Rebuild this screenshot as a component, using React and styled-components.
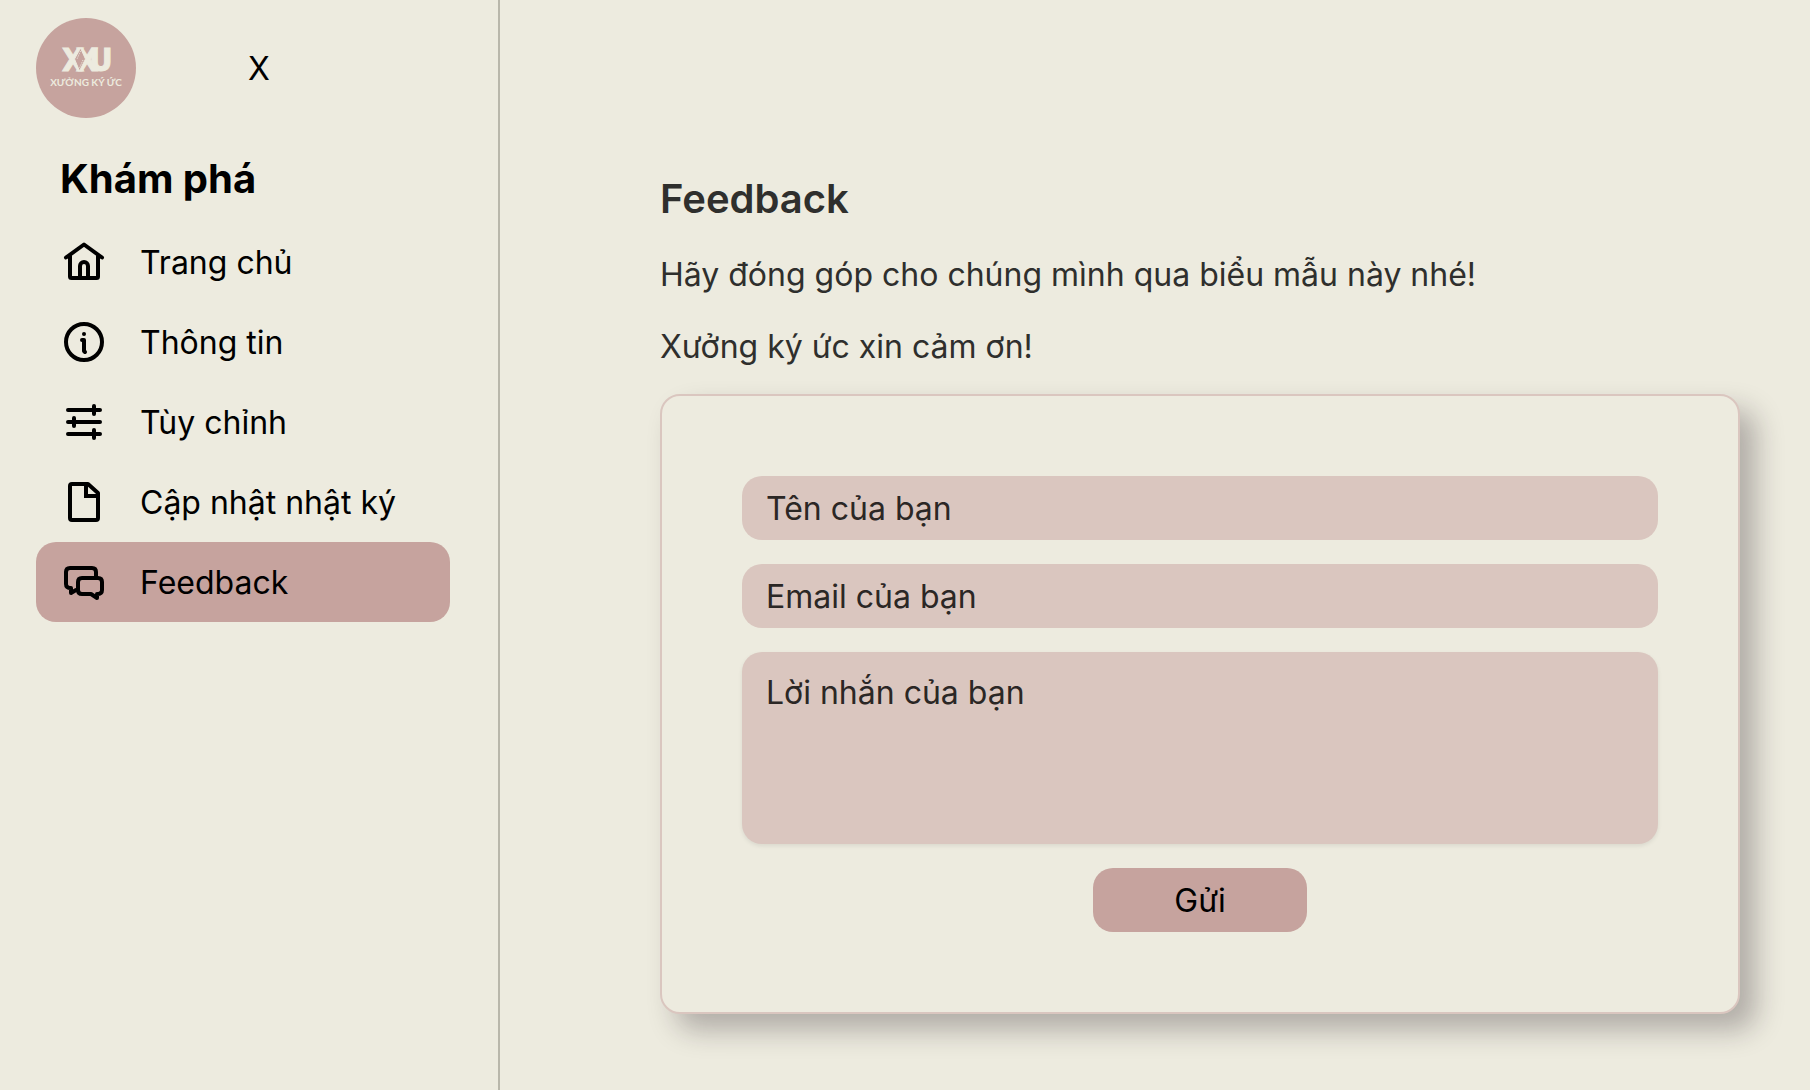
import React, { useState } from "react";
import styled, { createGlobalStyle, ThemeProvider } from "styled-components";

const theme = {
  bg: "#edebdf",
  primary: "#c6a39e",
  primary_soft: "#dac6bf",
  border: "#b9b7ab",
  text_primary: "#000000",
  text_secondary: "#2f2f2d",
  text_placeholder: "#2b2725",
};

const GlobalStyle = createGlobalStyle`
  * {
    box-sizing: border-box;
  }

  body {
    margin: 0;
    background: ${theme.bg};
    font-family: Inter, "Liberation Sans", sans-serif;
  }

  button,
  input,
  textarea {
    font-family: inherit;
  }
`;

const Page = styled.div`
  display: flex;
  min-height: 100vh;
  font-size: 32px;
  line-height: 50px;
  color: ${({ theme }) => theme.text_primary};
`;

const Sidebar = styled.aside`
  flex: 0 0 500px;
  padding: 18px 48px 18px 36px;
  border-right: 2px solid ${({ theme }) => theme.border};
`;

const SidebarHeader = styled.div`
  display: flex;
  align-items: center;
  gap: 103px;
  margin-bottom: 32px;
`;

const LogoLink = styled.a`
  display: block;
  width: 100px;
  height: 100px;
`;

const CloseButton = styled.button`
  width: 40px;
  padding: 2px 0 0;
  border: none;
  background: none;
  color: inherit;
  font-size: 32px;
  line-height: 50px;
  cursor: pointer;
`;

const SidebarTitle = styled.h2`
  margin: 0 0 14px;
  padding-left: 24px;
  font-size: 40px;
  font-weight: 700;
  line-height: 58px;
`;

const NavLink = styled.a`
  display: flex;
  align-items: center;
  gap: 36px;
  height: 80px;
  padding: 0 28px;
  border-radius: 20px;
  color: inherit;
  text-decoration: none;
  white-space: nowrap;
  background: ${({ $active, theme }) =>
    $active ? theme.primary : "transparent"};

  &:hover {
    background: ${({ theme }) => theme.primary};
  }
`;

const NavLabel = styled.span`
  padding-top: 2px;
`;

const Icon = styled.svg`
  flex: none;
  width: 40px;
  height: 40px;
  overflow: visible;
  fill: none;
  stroke: currentColor;
  stroke-width: 4px;
  stroke-linecap: round;
  stroke-linejoin: round;
`;

const Main = styled.main`
  flex: 1;
  min-width: 0;
  padding: 170px 70px 76px 160px;
  color: ${({ theme }) => theme.text_secondary};
`;

const Title = styled.h1`
  margin: 0 0 22px;
  font-size: 40px;
  font-weight: 600;
  line-height: 58px;
`;

const Desc = styled.p`
  margin: 0 0 22px;
`;

const Form = styled.form`
  display: flex;
  flex-direction: column;
  gap: 24px;
  padding: 80px;
  border: 2px solid ${({ theme }) => theme.primary_soft};
  border-radius: 20px;
  background: ${({ theme }) => theme.bg};
  box-shadow: 16px 16px 28px rgba(32, 22, 30, 0.29);
`;

const Input = styled.input`
  width: 100%;
  height: 64px;
  padding: 0 24px;
  border: none;
  border-radius: 20px;
  outline: none;
  background: ${({ theme }) => theme.primary_soft};
  color: ${({ theme }) => theme.text_placeholder};
  font-size: 32px;

  &::placeholder {
    color: ${({ theme }) => theme.text_placeholder};
    opacity: 1;
  }
`;

const TextArea = styled(Input)`
  display: block;
  height: 192px;
  padding: 16px 24px;
  line-height: 50px;
  resize: none;
  box-shadow: 0 2px 4px rgba(0, 0, 0, 0.08);
`;

const SubmitButton = styled.button`
  align-self: center;
  height: 64px;
  padding: 0 81px;
  border: none;
  border-radius: 20px;
  background: ${({ theme }) => theme.primary};
  color: ${({ theme }) => theme.text_primary};
  font-size: 32px;
  cursor: pointer;
`;

const Logo = () => (
  <svg viewBox="0 0 100 100" width="100" height="100" role="img">
    <circle cx="50" cy="50" r="50" fill={theme.primary} />
    <g fill={theme.bg} textAnchor="middle">
      <text
        x="37 51 65"
        y="53"
        fontFamily='"DejaVu Sans Condensed", "DejaVu Sans", sans-serif'
        fontSize="32"
        fontWeight="700"
        stroke={theme.bg}
        strokeWidth="1"
      >
        XXU
      </text>
      <text
        x="50"
        y="68"
        fontFamily="Lato, sans-serif"
        fontSize="10"
        fontWeight="700"
      >
        XƯỞNG KÝ ỨC
      </text>
    </g>
    {/* film strip diamond between the two X */}
    <path
      d="M44.5 30 L49.5 41 L43.5 53 L38.5 41 Z"
      fill={theme.primary}
      stroke={theme.bg}
      strokeWidth="1"
    />
    <g stroke={theme.bg} strokeWidth="1" strokeDasharray="1 1">
      <path d="M44.5 33 L41 41" />
      <path d="M47 42 L43.5 50" />
    </g>
  </svg>
);

const links = [
  {
    id: "home",
    label: "Trang chủ",
    icon: (
      <>
        <path d="M2 15.5 20 2.5 38 15.5" />
        <path d="M6 14V34.5Q6 36 7.5 36H32.5Q34 36 34 34.5V14" />
        <path d="M16 36V24a4 4 0 0 1 8 0V36" />
      </>
    ),
  },
  {
    id: "info",
    label: "Thông tin",
    icon: (
      <>
        <circle cx="20" cy="20" r="18" />
        <circle cx="20" cy="12" r="2" fill="currentColor" stroke="none" />
        <path d="M18 18H20V29L21 30" />
      </>
    ),
  },
  {
    id: "settings",
    label: "Tùy chỉnh",
    icon: (
      <>
        <path d="M4 8H36M4 20H36M4 32H36" />
        <path d="M30 4V12M10 16V24M30 28V36" />
      </>
    ),
  },
  {
    id: "diary",
    label: "Cập nhật nhật ký",
    icon: (
      <>
        <path d="M8 2H24L34 11V36Q34 38 32 38H8Q6 38 6 36V4Q6 2 8 2Z" />
        <path d="M22 3V14H33" strokeLinecap="butt" strokeLinejoin="miter" />
      </>
    ),
  },
  {
    id: "feedback",
    label: "Feedback",
    icon: (
      <>
        <path d="M32 14V10Q32 6 28 6H6Q2 6 2 10V22Q2 26 7 26V31L12 28" />
        <path d="M18 16H34Q38 16 38 20V28Q38 32 33 32V36L27 32H18Q14 32 14 28V20Q14 16 18 16Z" />
      </>
    ),
  },
];

const App = () => {
  const [active, setActive] = useState("feedback");

  return (
    <ThemeProvider theme={theme}>
      <GlobalStyle />
      <Page>
        <Sidebar>
          <SidebarHeader>
            <LogoLink href="#home" aria-label="Xưởng ký ức">
              <Logo />
            </LogoLink>
            <CloseButton type="button">X</CloseButton>
          </SidebarHeader>
          <SidebarTitle>Khám phá</SidebarTitle>
          <nav>
            {links.map((link) => (
              <NavLink
                key={link.id}
                href={`#${link.id}`}
                $active={active === link.id}
                onClick={() => setActive(link.id)}
              >
                <Icon viewBox="0 0 40 40" aria-hidden="true">
                  {link.icon}
                </Icon>
                <NavLabel>{link.label}</NavLabel>
              </NavLink>
            ))}
          </nav>
        </Sidebar>

        <Main>
          <Title>Feedback</Title>
          <Desc>Hãy đóng góp cho chúng mình qua biểu mẫu này nhé!</Desc>
          <Desc>Xưởng ký ức xin cảm ơn!</Desc>
          <Form onSubmit={(e) => e.preventDefault()}>
            <Input
              type="text"
              name="name"
              placeholder="Tên của bạn"
              aria-label="Tên của bạn"
            />
            <Input
              type="email"
              name="email"
              placeholder="Email của bạn"
              aria-label="Email của bạn"
            />
            <TextArea
              as="textarea"
              name="message"
              placeholder="Lời nhắn của bạn"
              aria-label="Lời nhắn của bạn"
            />
            <SubmitButton type="submit">Gửi</SubmitButton>
          </Form>
        </Main>
      </Page>
    </ThemeProvider>
  );
};

export default App;
